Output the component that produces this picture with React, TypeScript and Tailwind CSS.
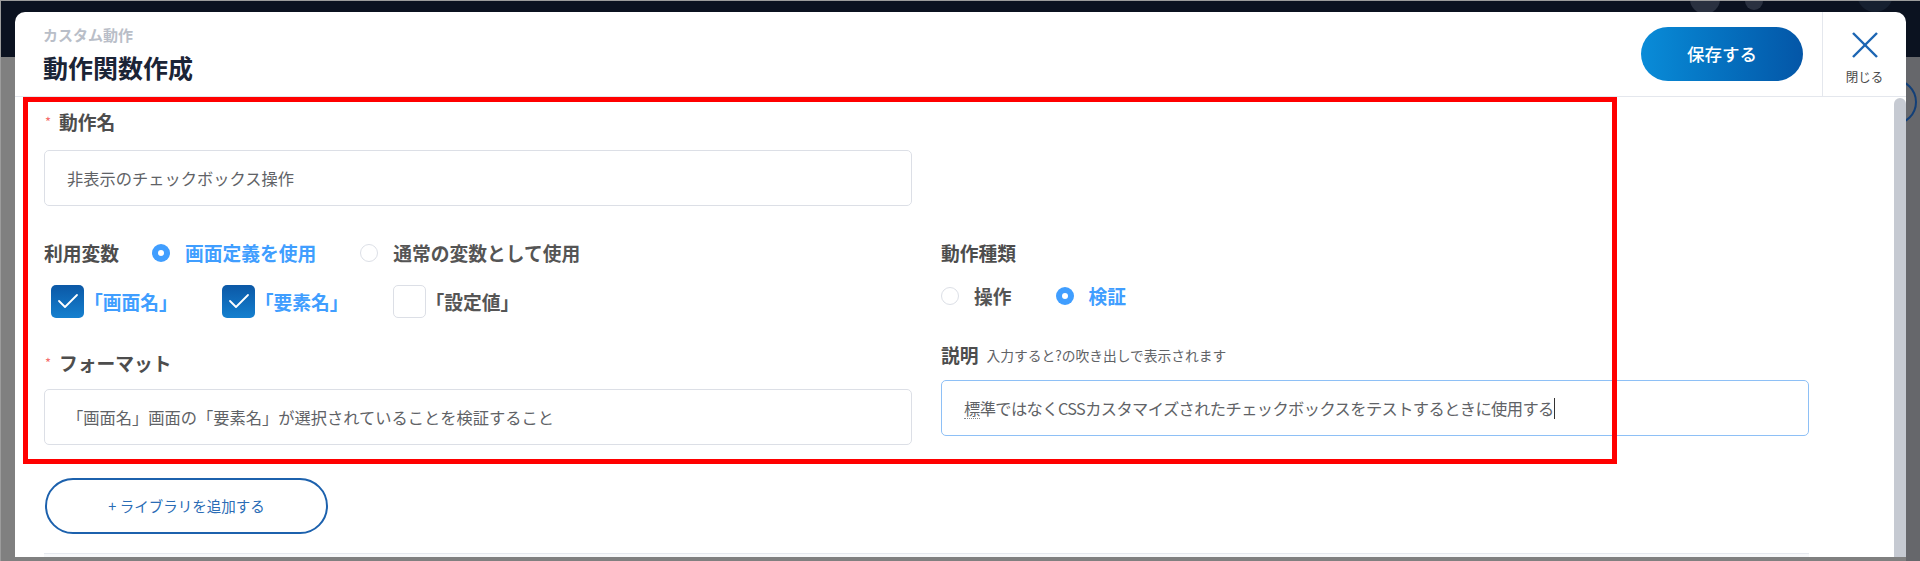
import React from "react";

function Radio({ checked, label, last }: { checked: boolean; label: string; last?: boolean }) {
  return (
    <div className={last ? "flex items-center" : "flex items-center mr-[44px]"}>
      {checked ? (
        <span className="w-[18px] h-[18px] rounded-full bg-[#409eff] flex items-center justify-center shrink-0">
          <span className="w-[6px] h-[6px] rounded-full bg-white" />
        </span>
      ) : (
        <span className="w-[18px] h-[18px] rounded-full border border-[#dcdfe6] bg-white shrink-0" />
      )}
      <span
        className={
          checked
            ? "ml-[15px] text-[18.75px] leading-[26px] font-semibold text-[#409eff]"
            : "ml-[15px] text-[18.75px] leading-[26px] font-semibold text-[#555555]"
        }
      >
        {label}
      </span>
    </div>
  );
}

function Check({ checked, label }: { checked: boolean; label: string }) {
  return (
    <div className="flex items-center mr-[44px]">
      {checked ? (
        <span className="w-[33px] h-[33px] rounded-[5px] bg-linear-to-b from-[#0c58a6] to-[#1580cf] flex items-center justify-center shrink-0">
          <svg width="33" height="33" viewBox="0 0 33 33">
            <polyline points="8,16 14,22 26,10" fill="none" stroke="#ffffff" strokeWidth="1.8" strokeLinejoin="round" strokeLinecap="round" />
          </svg>
        </span>
      ) : (
        <span className="w-[33px] h-[33px] rounded-[5px] border border-[#dcdfe6] bg-white shrink-0" />
      )}
      <span
        className={
          checked
            ? "text-[18.75px] leading-[26px] font-semibold text-[#409eff]"
            : "text-[18.75px] leading-[26px] font-semibold text-[#555555]"
        }
      >
        {label}
      </span>
    </div>
  );
}

export default function App() {
  return (
    <div className="relative w-[1920px] h-[561px] overflow-hidden bg-[#808080] [font-family:'Noto_Sans_CJK_JP','Noto_Sans',sans-serif]">
      {/* backdrop page (dimmed) */}
      <div className="absolute top-0 left-0 w-[1920px] h-[57px] bg-[#0b1220]">
        <div className="absolute left-[1690px] top-[-16px] w-[30px] h-[30px] rounded-full bg-[#2a3140]" />
        <div className="absolute left-[1745px] top-[-8px] w-[18px] h-[18px] rounded-full bg-[#2a3140]" />
        <div className="absolute left-[1857px] top-[-24px] w-[36px] h-[36px] rounded-full bg-[#162030]" />
      </div>
      <div className="absolute right-0 top-[57px] w-[14px] h-[504px] bg-[#66676b]" />
      <div className="absolute left-[1871px] top-[79px] w-[46px] h-[46px] rounded-full border-2 border-[#123f78]" />
      <div className="absolute top-0 left-0 w-[1920px] h-px bg-[#9c9c9c]" />
      <div className="absolute top-0 left-0 w-px h-[561px] bg-[#9c9c9c]" />

      {/* modal */}
      <div className="absolute left-[15px] top-[12px] w-[1891px] h-[545px] bg-white rounded-t-[10px] flex flex-col overflow-hidden">
        {/* header */}
        <div className="h-[85px] shrink-0 flex items-center border-b border-[#e4e7ed]">
          <div className="flex-1 self-stretch pl-[28px] pt-[13px] flex flex-col">
            <div className="text-[15px] leading-[20px] font-semibold text-[#b9bec8]">カスタム動作</div>
            <div className="mt-[6px] text-[25px] leading-[32px] font-bold text-[#1b2436]">動作関数作成</div>
          </div>
          <button className="w-[162px] h-[54px] rounded-full bg-linear-to-r from-[#0a8cd8] to-[#0456a7] text-white text-[17.5px] font-medium mr-[19px]">
            保存する
          </button>
          <div className="w-[84px] self-stretch border-l border-[#e4e7ed] flex flex-col items-center pt-[20px]">
            <svg width="28" height="26" viewBox="0 0 28 26">
              <line x1="2" y1="1" x2="26" y2="25" stroke="#1b65b3" strokeWidth="2.4" />
              <line x1="26" y1="1" x2="2" y2="25" stroke="#1b65b3" strokeWidth="2.4" />
            </svg>
            <div className="mt-[11px] text-[12.5px] leading-[16px] text-[#4a4a4a]">閉じる</div>
          </div>
        </div>

        {/* body */}
        <div className="flex flex-1 min-h-0">
          <div className="flex-1 pl-[29px] pt-[12px] overflow-hidden">
            {/* 動作名 */}
            <div className="flex items-center h-[26px]">
              <span className="text-[13px] text-[#f56c6c] mr-[8px] pl-px">*</span>
              <span className="text-[18.75px] leading-[26px] font-semibold text-[#4d4d4d]">動作名</span>
            </div>
            <div className="mt-[15px] w-[868px] h-[56px] border border-[#dcdfe6] rounded-[5px] flex items-center pl-[22px] text-[16.25px] text-[#606266]">
              非表示のチェックボックス操作
            </div>

            <div className="mt-[34px] flex gap-[29px]">
              {/* left column */}
              <div className="w-[868px] flex flex-col">
                <div className="flex items-center h-[26px]">
                  <span className="text-[18.75px] leading-[26px] font-semibold text-[#4d4d4d] mr-[33px]">利用変数</span>
                  <Radio checked label="画面定義を使用" />
                  <Radio checked={false} label="通常の変数として使用" last />
                </div>
                <div className="mt-[19px] h-[33px] flex items-center pl-[7px]">
                  <Check checked label="「画面名」" />
                  <Check checked label="「要素名」" />
                  <Check checked={false} label="「設定値」" />
                </div>
                <div className="mt-[32px] flex items-center h-[26px]">
                  <span className="text-[13px] text-[#f56c6c] mr-[8px] pl-px">*</span>
                  <span className="text-[18.75px] leading-[26px] font-semibold text-[#4d4d4d]">フォーマット</span>
                </div>
                <div className="mt-[13px] w-[868px] h-[56px] border border-[#dcdfe6] rounded-[5px] flex items-center pl-[22px] text-[16.25px] text-[#606266]">
                  「画面名」画面の「要素名」が選択されていることを検証すること
                </div>
              </div>

              {/* right column */}
              <div className="w-[868px] flex flex-col">
                <div className="h-[26px] flex items-center">
                  <span className="text-[18.75px] leading-[26px] font-semibold text-[#4d4d4d]">動作種類</span>
                </div>
                <div className="mt-[17px] h-[26px] flex items-center">
                  <Radio checked={false} label="操作" />
                  <Radio checked label="検証" last />
                </div>
                <div className="mt-[33px] h-[26px] flex items-center">
                  <span className="text-[18.75px] leading-[26px] font-semibold text-[#4d4d4d]">説明</span>
                  <span className="ml-[8px] text-[13.75px] leading-[26px] text-[#606266]">入力すると?の吹き出しで表示されます</span>
                </div>
                <div className="mt-[12px] w-[868px] h-[56px] border border-[#8ec0f6] rounded-[5px] flex items-center pl-[22px] text-[16.25px] tracking-[-0.6px] text-[#606266]">
                  <span className="border-b border-dotted border-[#8a8a8a] leading-[20px]">標</span>
                  <span>準ではなくCSSカスタマイズされたチェックボックスをテストするときに使用する</span>
                  <span className="inline-block w-px h-[21px] bg-[#333333]" />
                </div>
              </div>
            </div>

            <button className="mt-[33px] ml-px w-[283px] h-[56px] rounded-full border-2 border-[#1c61ad] bg-white text-[14.5px] text-[#2a6cb5] flex items-center justify-center">
              + ライブラリを追加する
            </button>

            <div className="mt-[19px] w-[1765px] h-[30px] border-t border-[#e6e9ef] bg-[#f7f8fa]" />
          </div>
          <div className="w-[12px] shrink-0 mt-px bg-[#c6cad2] rounded-t-full" />
        </div>
      </div>

      {/* red annotation box */}
      <div className="absolute left-[23px] top-[97px] w-[1594px] h-[367px] border-[5px] border-[#ff0000] pointer-events-none" />
    </div>
  );
}
